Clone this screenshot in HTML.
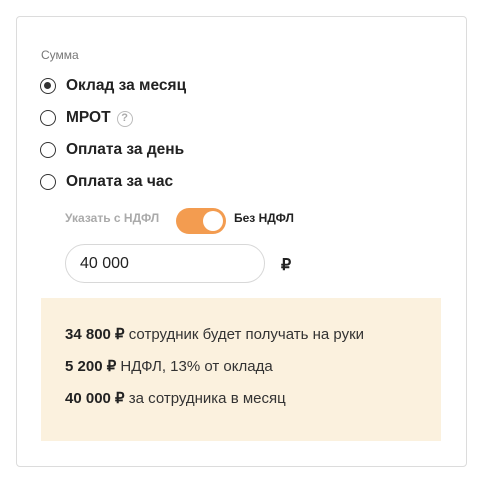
<!DOCTYPE html>
<html><head><meta charset="utf-8"><style>
*{box-sizing:border-box;margin:0;padding:0}
body{width:495px;height:494px;background:#fff;font-family:"Liberation Sans",sans-serif;color:#222;position:relative;overflow:hidden}
.card{position:absolute;left:16px;top:16px;width:451px;height:451px;border:1px solid #dcdcdc;border-radius:4px}
.abs{position:absolute;white-space:nowrap}
.lbl{left:41px;top:48px;font-size:12px;color:#777}
.r{left:40px;width:16px;height:16px;border:1.5px solid #333;border-radius:50%}
.r.on::after{content:"";position:absolute;left:3px;top:3px;width:7px;height:7px;border-radius:50%;background:#333}
.rt{left:66px;font-size:15.5px;font-weight:bold;color:#222}
.q{display:inline-block;width:16px;height:16px;border:1.5px solid #bbb;border-radius:50%;color:#aaa;font-size:11px;text-align:center;line-height:13px;vertical-align:1px;margin-left:6px}
.tg{left:176px;top:208px;width:50px;height:26px;border-radius:13px;background:#f39c50}
.tg::after{content:"";position:absolute;right:3px;top:3px;width:20px;height:20px;border-radius:50%;background:#fff}
.inp{left:65px;top:244px;width:200px;height:39px;border:1px solid #d8d8d8;border-radius:20px;font-size:16px;padding:10px 0 0 14px}
.box{left:41px;top:298px;width:400px;height:143px;background:#fbf1de}
.ln{left:65px;font-size:15px;color:#333}
.ln b{color:#222}
</style></head><body>
<div class="card"></div>
<div class="abs lbl">Сумма</div>
<div class="abs r on" style="top:78px"></div><div class="abs rt" style="top:77px">Оклад за месяц</div>
<div class="abs r" style="top:110px"></div><div class="abs rt" style="top:109px">МРОТ<span class="q">?</span></div>
<div class="abs r" style="top:142px"></div><div class="abs rt" style="top:141px">Оплата за день</div>
<div class="abs r" style="top:174px"></div><div class="abs rt" style="top:173px">Оплата за час</div>
<div class="abs" style="left:65px;top:211px;font-size:12px;font-weight:bold;color:#aaa">Указать с НДФЛ</div>
<div class="abs tg"></div>
<div class="abs" style="left:234px;top:211px;font-size:12px;font-weight:bold;color:#222">Без НДФЛ</div>
<div class="abs inp">40 000</div>
<div class="abs" style="left:281px;top:255px;font-size:16px;font-weight:bold">₽</div>
<div class="abs box"></div>
<div class="abs ln" style="top:325px"><b>34 800 ₽</b> сотрудник будет получать на руки</div>
<div class="abs ln" style="top:357px"><b>5 200 ₽</b> НДФЛ, 13% от оклада</div>
<div class="abs ln" style="top:389px"><b>40 000 ₽</b> за сотрудника в месяц</div>
</body></html>
